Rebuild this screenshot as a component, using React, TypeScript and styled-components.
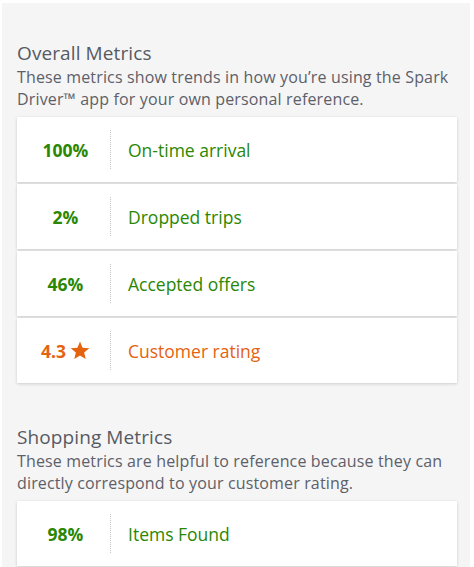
import * as React from "react";
import styled, { createGlobalStyle } from "styled-components";

const colors = {
  page: "#f5f5f6",
  heading: "#575a62",
  text: "#5d6068",
  green: "#2a8703",
  orange: "#e5620f",
  divider: "#c4c4c4",
};

const GlobalStyle = createGlobalStyle`
  html, body {
    margin: 0;
    padding: 0;
    background: #ffffff;
  }
  body {
    font-family: "Open Sans", "Liberation Sans", sans-serif;
    -webkit-font-smoothing: antialiased;
  }
`;

const Screen = styled.div`
  width: 474px;
  height: 567px;
  box-sizing: border-box;
  overflow: hidden;
  padding: 3px 4px 0 2px;
`;

const Panel = styled.main`
  background: ${colors.page};
  height: 100%;
  padding: 0 13px 0 15px;
  box-sizing: border-box;
`;

const Section = styled.section`
  padding-top: 37px;
  padding-bottom: 4px;
`;

const Title = styled.h2`
  margin: 0;
  font-size: 19px;
  font-weight: 400;
  line-height: 26px;
  color: ${colors.heading};
  letter-spacing: 0.1px;
`;

const Description = styled.p`
  margin: 0 0 7px;
  font-size: 16px;
  line-height: 22px;
  letter-spacing: 0.15px;
  color: ${colors.text};
`;

const List = styled.div`
  display: flex;
  flex-direction: column;
  gap: 2px;
`;

const Row = styled.div`
  display: flex;
  align-items: center;
  height: 65px;
  background: #ffffff;
  box-shadow: 0 1px 3px rgba(0, 0, 0, 0.16), 0 0 1px rgba(0, 0, 0, 0.06);
`;

const Value = styled.div<{ $tone: "green" | "orange" }>`
  width: 93px;
  padding-left: 4px;
  box-sizing: border-box;
  display: flex;
  justify-content: center;
  align-items: center;
  gap: 4px;
  font-size: 17.5px;
  font-weight: 700;
  color: ${(p) => (p.$tone === "orange" ? colors.orange : colors.green)};
`;

const Divider = styled.span`
  align-self: center;
  height: 39px;
  border-left: 1px dotted ${colors.divider};
`;

const Label = styled.div<{ $tone: "green" | "orange" }>`
  padding-left: 17px;
  font-size: 17.5px;
  color: ${(p) => (p.$tone === "orange" ? colors.orange : colors.green)};
`;

const Star = () => (
  <svg width="20" height="19" viewBox="0 0 24 23" aria-hidden="true">
    <path
      fill="currentColor"
      d="M12 0.6l3.1 7.5 8.1 0.6-6.2 5.2 1.9 7.9L12 17.5l-6.9 4.3 1.9-7.9L0.8 8.7l8.1-0.6z"
    />
  </svg>
);

type Metric = {
  value: string;
  label: string;
  tone: "green" | "orange";
  star?: boolean;
};

const overall: Metric[] = [
  { value: "100%", label: "On-time arrival", tone: "green" },
  { value: "2%", label: "Dropped trips", tone: "green" },
  { value: "46%", label: "Accepted offers", tone: "green" },
  { value: "4.3", label: "Customer rating", tone: "orange", star: true },
];

const shopping: Metric[] = [
  { value: "98%", label: "Items Found", tone: "green" },
];

const MetricList = ({ items }: { items: Metric[] }) => (
  <List>
    {items.map((m) => (
      <Row key={m.label}>
        <Value $tone={m.tone}>
          {m.value}
          {m.star && <Star />}
        </Value>
        <Divider />
        <Label $tone={m.tone}>{m.label}</Label>
      </Row>
    ))}
  </List>
);

export default function App() {
  return (
    <Screen>
      <GlobalStyle />
      <Panel>
        <Section>
          <Title>Overall Metrics</Title>
          <Description>
            These metrics show trends in how you’re using the Spark Driver™ app
            for your own personal reference.
          </Description>
          <MetricList items={overall} />
        </Section>
        <Section>
          <Title>Shopping Metrics</Title>
          <Description>
            These metrics are helpful to reference because they can directly
            correspond to your customer rating.
          </Description>
          <MetricList items={shopping} />
        </Section>
      </Panel>
    </Screen>
  );
}
